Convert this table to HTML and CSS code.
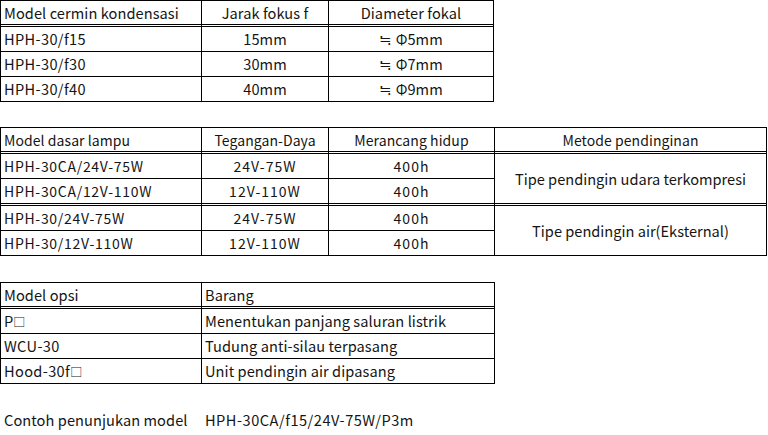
FILE: index.html
```html
<!DOCTYPE html>
<html lang="id">
<head>
<meta charset="utf-8">
<link rel="stylesheet" href="styles.css">
</head>
<body>
<div class="page">
  <table class="grid t1 wide">
    <colgroup><col class="c201"><col class="c127"><col class="c165"></colgroup>
    <tr class="head"><td>Model cermin kondensasi</td><td class="ctr">Jarak fokus f</td><td class="ctr">Diameter fokal</td></tr>
    <tr><td class="code">HPH-30/f15</td><td class="ctr">15mm</td><td class="ctr">≒ Φ5mm</td></tr>
    <tr><td class="code">HPH-30/f30</td><td class="ctr">30mm</td><td class="ctr">≒ Φ7mm</td></tr>
    <tr><td class="code">HPH-30/f40</td><td class="ctr">40mm</td><td class="ctr">≒ Φ9mm</td></tr>
  </table>

  <table class="grid t2 narrow">
    <colgroup><col class="c201"><col class="c127"><col class="c166"><col class="c272"></colgroup>
    <tr class="head"><td>Model dasar lampu</td><td class="ctr">Tegangan-Daya</td><td class="ctr">Merancang hidup</td><td class="ctr">Metode pendinginan</td></tr>
    <tr><td class="code2">HPH-30CA/24V-75W</td><td class="ctr num">24V-75W</td><td class="ctr num">400h</td><td class="ctr big dbl" rowspan="2">Tipe pendingin udara terkompresi</td></tr>
    <tr class="dblrow"><td class="code2">HPH-30CA/12V-110W</td><td class="ctr num">12V-110W</td><td class="ctr num">400h</td></tr>
    <tr><td class="code2">HPH-30/24V-75W</td><td class="ctr num">24V-75W</td><td class="ctr num">400h</td><td class="ctr big" rowspan="2">Tipe pendingin air(Eksternal)</td></tr>
    <tr><td class="code2">HPH-30/12V-110W</td><td class="ctr num">12V-110W</td><td class="ctr num">400h</td></tr>
  </table>

  <table class="grid t3 wide">
    <colgroup><col class="c201"><col class="c293"></colgroup>
    <tr class="head"><td>Model opsi</td><td>Barang</td></tr>
    <tr><td>P<span class="box">□</span></td><td>Menentukan panjang saluran listrik</td></tr>
    <tr><td class="code">WCU-30</td><td>Tudung anti-silau terpasang</td></tr>
    <tr><td class="code">Hood-30f<span class="box">□</span></td><td>Unit pendingin air dipasang</td></tr>
  </table>

  <div class="example wide">
    <span class="ex-label">Contoh penunjukan model</span>
    <span class="ex-value">HPH-30CA/f15/24V-75W/P3m</span>
  </div>
</div>
</body>
</html>
```

FILE: styles.css
```css
html, body {
  margin: 0;
  padding: 0;
  background: #fff;
}
body {
  font-family: "Noto Sans CJK JP", "Noto Sans", sans-serif;
  font-size: 14px;
  color: #151515;
}
.page {
  width: 768px;
  height: 435px;
}
.grid {
  border-collapse: separate;
  border-spacing: 0;
  table-layout: fixed;
  border-top: 1px solid #000;
  border-left: 1px solid #000;
}
.grid td {
  box-sizing: border-box;
  border-right: 1px solid #000;
  border-bottom: 1px solid #000;
  padding: 0 0 0 3px;
  height: 25px;
  line-height: 20px;
  white-space: nowrap;
  vertical-align: middle;
}
.grid tr.head td {
  border-bottom: 3px double #000;
  height: 26px;
}
.grid td.ctr {
  text-align: center;
  padding: 0;
}
.c201 { width: 201px; }
.c127 { width: 127px; }
.c165 { width: 165px; }
.c166 { width: 166px; }
.c272 { width: 272px; }
.c293 { width: 293px; }

.t1 { width: 494px; }
.t2 { width: 767px; margin-top: 25px; }
.t3 { width: 494px; margin-top: 26px; }

.t2 tr.dblrow td,
.t2 td.dbl {
  border-bottom: 3px double #000;
  height: 27px;
}
.wide {
  font-size: 14.6px;
  letter-spacing: 0.07px;
}
.wide td.code { letter-spacing: 0.35px; }
.narrow td { letter-spacing: 0.07px; }
.narrow td.code2 { letter-spacing: 0.7px; }
.narrow td.num { letter-spacing: 1px; }
.narrow td.big { font-size: 14.6px; letter-spacing: 0; }

.box {
  font-size: 12px;
  letter-spacing: 0;
}

.example {
  display: flex;
  margin-top: 26px;
  padding-left: 4px;
  line-height: 20px;
}
.ex-label { width: 201px; }
.ex-value { letter-spacing: 0.5px; }
```
